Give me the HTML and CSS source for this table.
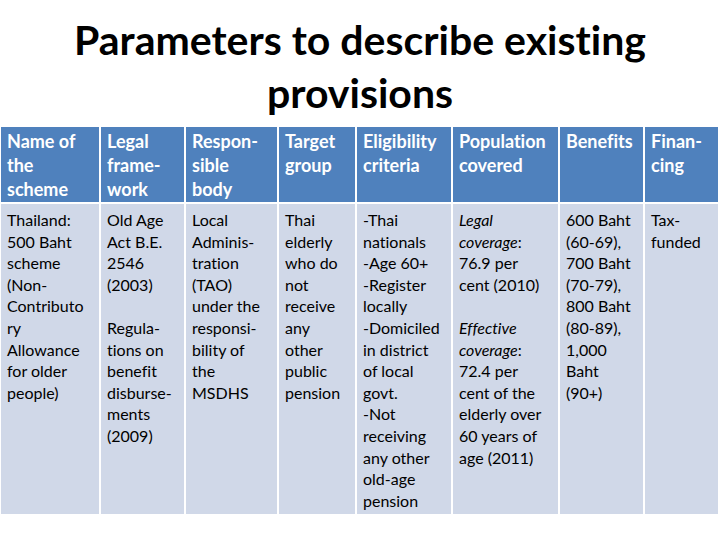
FILE: index.html
```html
<!DOCTYPE html>
<html>
<head>
<meta charset="utf-8">
<link rel="stylesheet" href="styles.css">
</head>
<body>
<h1 class="title">Parameters to describe existing<br>provisions</h1>
<table class="grid">
  <colgroup>
    <col class="c1"><col class="c2"><col class="c3"><col class="c4"><col class="c5"><col class="c6"><col class="c7"><col class="c8">
  </colgroup>
  <thead>
    <tr>
      <th>Name of<br>the<br>scheme</th>
      <th>Legal<br>frame-<br>work</th>
      <th>Respon-<br>sible<br>body</th>
      <th>Target<br>group</th>
      <th>Eligibility<br>criteria</th>
      <th>Population<br>covered</th>
      <th>Benefits</th>
      <th>Finan-<br>cing</th>
    </tr>
  </thead>
  <tbody>
    <tr>
      <td>Thailand:<br>500 Baht<br>scheme<br>(Non-<br>Contributo<br>ry<br>Allowance<br>for older<br>people)</td>
      <td>Old Age<br>Act B.E.<br>2546<br>(2003)<br><br>Regula-<br>tions on<br>benefit<br>disburse-<br>ments<br>(2009)</td>
      <td>Local<br>Adminis-<br>tration<br>(TAO)<br>under the<br>responsi-<br>bility of<br>the<br>MSDHS</td>
      <td>Thai<br>elderly<br>who do<br>not<br>receive<br>any<br>other<br>public<br>pension</td>
      <td>-Thai<br>nationals<br>-Age 60+<br>-Register<br>locally<br>-Domiciled<br>in district<br>of local<br>govt.<br>-Not<br>receiving<br>any other<br>old-age<br>pension</td>
      <td><em>Legal<br>coverage</em>:<br>76.9 per<br>cent (2010)<br><br><em>Effective<br>coverage</em>:<br>72.4 per<br>cent of the<br>elderly over<br>60 years of<br>age (2011)</td>
      <td>600 Baht<br>(60-69),<br>700 Baht<br>(70-79),<br>800 Baht<br>(80-89),<br>1,000<br>Baht<br>(90+)</td>
      <td>Tax-<br>funded</td>
    </tr>
  </tbody>
</table>
</body>
</html>
```
FILE: styles.css
```css
html, body {
  margin: 0;
  padding: 0;
  background: #ffffff;
}
body {
  width: 720px;
  height: 540px;
  font-family: Lato, "Open Sans", "Liberation Sans", sans-serif;
  font-variant-ligatures: none;
  overflow: hidden;
}
.title {
  margin: 0;
  padding-top: 13px;
  height: 125px;
  box-sizing: border-box;
  text-align: center;
  font-size: 41px;
  line-height: 53px;
  font-weight: bold;
  color: #000000;
}
.grid {
  border-collapse: separate;
  border-spacing: 2px;
  margin-left: -1px;
  table-layout: fixed;
  width: 721px;
}
.c1 { width: 98px; }
.c2 { width: 83px; }
.c3 { width: 91px; }
.c4 { width: 76px; }
.c5 { width: 94px; }
.c6 { width: 105px; }
.c7 { width: 83px; }
.c8 { width: 73px; }
.grid th {
  background: #4f81bd;
  color: #ffffff;
  text-align: left;
  vertical-align: top;
  font-size: 18px;
  line-height: 24px;
  font-weight: bold;
  padding: 2px 4px 1px 6px;
  height: 72px;
  white-space: nowrap;
}
.grid td {
  background: #d0d8e8;
  color: #000000;
  vertical-align: top;
  font-size: 16px;
  line-height: 21.6px;
  padding: 5px 4px 0 6px;
  height: 305px;
  white-space: nowrap;
}
.grid em {
  font-style: italic;
}
```
